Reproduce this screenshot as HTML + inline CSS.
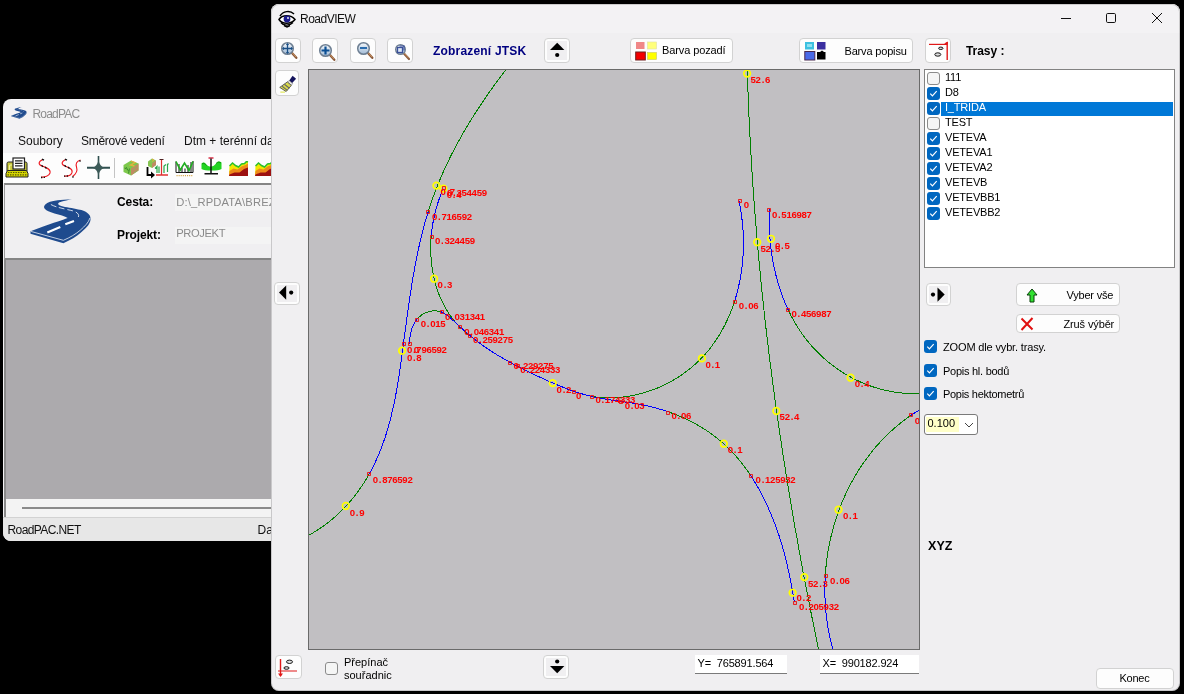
<!DOCTYPE html>
<html lang="cs"><head><meta charset="utf-8"><title>RoadVIEW</title>
<style>
html,body{margin:0;padding:0;background:#000;}
body{width:1184px;height:694px;overflow:hidden;position:relative;font-family:"Liberation Sans",sans-serif;font-size:11px;color:#000;}
.a{position:absolute;}
#pac,#rv{will-change:transform;}
.t{position:absolute;white-space:nowrap;line-height:1;}
/* RoadPAC window */
#pac{left:3px;top:99px;width:560px;height:442px;background:#f3f2f4;border-radius:8px;overflow:hidden;}
#pac .ttl{left:29.500px;top:9px;font-size:12px;color:#8c8c8c;letter-spacing:-0.800px;}
#pac .menu{top:36px;font-size:12px;color:#111;}
#pac .tb{left:0;top:54px;width:560px;height:30px;background:#fdfdfd;}
#pac .panel{left:1px;top:84px;width:560px;height:77px;background:#f0eff1;border-top:2px solid #858585;border-left:1.500px solid #9a9a9a;border-bottom:2px solid #858585;box-sizing:border-box;}
#pac .gray{left:1px;top:161px;width:560px;height:239px;background:#acaaad;border-left:2px solid #8a8a8a;box-sizing:border-box;}
#pac .sbar{left:1px;top:400px;width:560px;height:18px;background:#f3f3f3;border-left:2px solid #8a8a8a;box-sizing:border-box;}
#pac .status{left:0;top:418px;width:560px;height:24px;background:#e7e7e7;border-top:1px solid #d2d2d2;box-sizing:border-box;}
#pac .lab{font-weight:bold;font-size:12px;color:#000;letter-spacing:-0.1px;}
#pac .fld{height:17px;background:#f4f4f4;color:#8a8a8a;font-size:11.200px;}
/* RoadVIEW window */
#rv{left:271px;top:4px;width:909px;height:686.700px;background:#f0eff1;border-radius:8px;overflow:hidden;}
#rv:after{content:"";position:absolute;left:0;top:0;right:0;bottom:0;border-radius:8px;box-shadow:inset 0 0 0 1px rgba(0,0,0,0.16);pointer-events:none;}
#rv .tbar{left:0;top:0;width:909px;height:29px;background:#f3f2f4;}
.btn{position:absolute;background:#fdfdfd;border:1px solid #d2d2d2;border-radius:4px;box-sizing:border-box;}
.btn svg{position:absolute;}
.ib{position:absolute;left:2px;top:2px;right:2px;bottom:2px;background:#f0eff1;}
.cb{position:absolute;width:13px;height:13px;box-sizing:border-box;border-radius:3px;}
.cb.off{border:1px solid #8b8b8b;background:#f5f5f5;}
.cb.on{background:#0067c0;}
.cb.on svg{position:absolute;left:0;top:0;}
#canvas{left:37px;top:65px;width:612px;height:581px;background:#c1bfc2;border:1px solid #6a6a6a;box-sizing:border-box;overflow:hidden;}
#canvas svg.cv{position:absolute;left:0;top:0;}
.lb text{font-family:"Liberation Sans",sans-serif;font-weight:bold;font-size:9.6px;letter-spacing:-0.28px;fill:#ff0000;}
#list{left:653px;top:65px;width:251px;height:199px;background:#fff;border:1px solid #828282;box-sizing:border-box;}
#list .it{position:absolute;left:20px;letter-spacing:-0.200px;font-size:11px;line-height:1;white-space:nowrap;}
.inp{position:absolute;background:#fff;border-bottom:1px solid #7a7a7a;box-sizing:border-box;height:19px;}
</style></head><body>

<!-- ============ RoadPAC window (background) ============ -->
<div id="pac" class="a">
  <svg class="a" style="left:8.300px;top:7.600px" width="16" height="12" viewBox="0 0 62 46"><use href="#road"/></svg>
  <div class="t ttl">RoadPAC</div>
  <div class="t menu" style="left:15px">Soubory</div>
  <div class="t menu" style="left:78px;letter-spacing:-0.280px">Směrové vedení</div>
  <div class="t menu" style="left:181px">Dtm + terénní data</div>
  <div class="a tb">
    <!-- printer/list : page x6-28 y157-177 -->
    <svg class="a" style="left:2px;top:4px" width="24" height="21" viewBox="0 0 24 21"><path d="M2 6.500q0-1.500 1.500-1.500h17q1.500 0 1.500 1.500v8h-20z" fill="#c9c93a" stroke="#222" stroke-width="1"/><path d="M4.500 14v-5q0-1 1-1h1.500" fill="none" stroke="#f0f0a0" stroke-width="1.200"/><rect x="8" y="1" width="11.500" height="11" fill="#fff" stroke="#222" stroke-width="1.200"/><path d="M10 3.800h7.500M10 6.300h7.500M10 8.800h7.500" stroke="#222" stroke-width="1.300"/><path d="M2.500 13.500h19l1.500 3v3.500h-22v-3.500z" fill="#d6d600" stroke="#222" stroke-width="1"/><path d="M3 15.500h18M2.500 17.800h19" stroke="#55550a" stroke-width="1.200" stroke-dasharray="1.400 1.100"/></svg>
    <!-- S curve : page x38-52 y159-178 -->
    <svg class="a" style="left:34px;top:5px" width="17" height="21" viewBox="0 0 17 21"><path d="M6 1.500c-5 2-5 5-1 6.500c4 1.500 9 3 8 7c-1 3-5 4.500-9 4" fill="none" stroke="#ee1c24" stroke-width="1.100"/><path d="M5 1.200l2 1M4.500 7.200l1.500 1.500M8 9l1.500 1.500M4 19.500h1.300M6.700 19.300h1.300" stroke="#111" stroke-width="1.300"/></svg>
    <!-- SS : page x61-79 -->
    <svg class="a" style="left:57px;top:5px" width="22" height="21" viewBox="0 0 22 21"><path d="M6 1.500c-5 2-5 5-1 6.500c4 1.500 8 3 7 6.500c-1 3-4 4-8 3.500" fill="none" stroke="#ee1c24" stroke-width="1.100"/><path d="M20.500 2c-4 1-5 4-4 7c1 3 1 6-4 9.500" fill="none" stroke="#ee1c24" stroke-width="1.100"/><path d="M5 1.200l2 1M4.500 7.200l1.500 1.500M8 9l1.500 1.500M4 18.200h1.300M6.700 18h1.300M12.500 19.500l1-1M19.500 2.500l1 1" stroke="#111" stroke-width="1.300"/></svg>
    <!-- interchange : page x87-109 y156.500-179 -->
    <svg class="a" style="left:84px;top:3px" width="23" height="23" viewBox="0 0 23 23"><path d="M0 11.800h23" stroke="#2f4f4f" stroke-width="2"/><path d="M11.500 0v23" stroke="#2f4f4f" stroke-width="1.600"/><path d="M11.500 1c0 6-1.800 9.300-6 10.800c4.200 1.500 6 4.800 6 10.200c0-5.400 1.800-8.700 6-10.200c-4.200-1.500-6-4.800-6-10.800z" fill="#3c5a58"/></svg>
    <div class="a" style="left:111px;top:5px;width:1px;height:20px;background:#c4c4c4"></div>
    <!-- cube: page x123-138 y160-176 -->
    <svg class="a" style="left:120px;top:7px" width="16" height="16" viewBox="0 0 16 16"><path d="M0.500 5l7.500-4.500 7.500 3v7l-7.500 5-7.500-3.500z" fill="#7dc84c"/><path d="M8 8.500l7.500-5v7l-7.500 5z" fill="#c08a62"/><path d="M8 1l4 1.500-4.500 2.500 4 1" fill="none" stroke="#e2b040" stroke-width="1.300"/><path d="M3 7l2.500 4M6.500 8.500l-1 5M1.500 8l2 1" stroke="#3f8f2f" stroke-width="1"/><path d="M10 10l4-3M11 13l3.500-3" stroke="#86b860" stroke-width="0.900"/></svg>
    <!-- icon6: page x147-168.500 y158-178.500 -->
    <svg class="a" style="left:143px;top:5px" width="23" height="21" viewBox="0 0 23 21"><path d="M2 3.500l4-3 4 2v4.500l-4 3-4-2z" fill="#86c552"/><path d="M6 5.500l4-3v4.500l-4 3z" fill="#c08a62"/><path d="M6 1l2 1-2 1.500" fill="none" stroke="#e2b040" stroke-width="1"/><path d="M1.500 9v8h4" fill="none" stroke="#000" stroke-width="1.800"/><path d="M5 13.500l4 3.500-4 3.500z" fill="#000"/><path d="M10 17h12" stroke="#e03030" stroke-width="1.300"/><path d="M15.500 2v15" stroke="#e03030" stroke-width="1.200"/><path d="M13.500 1.500h4" stroke="#502020" stroke-width="1.200"/><path d="M9 10.500l2-2v6.500M13 15v-6.500M18 15v-7l2-1.500M21.500 14v-7.500l1-1" fill="none" stroke="#2aa84a" stroke-width="1.200"/></svg>
    <!-- icon7: page x176-193.500 y161-176.500 -->
    <svg class="a" style="left:172px;top:7px" width="19" height="18" viewBox="0 0 19 18"><path d="M1 1.500v11M4 4v8.500M7 8v4.500M10 8.500v4M13 5v7.500M16 2v10.500M18 1v11.500M1 12.500h17" fill="none" stroke="#111" stroke-width="1"/><path d="M1 1.500l4.300 8.500 4.200-7 4.500 7.500 4-9" fill="none" stroke="#1fae1f" stroke-width="1.600"/><path d="M1.500 15.700h16.500" stroke="#d8a848" stroke-width="1.200" stroke-dasharray="1.100 1"/></svg>
    <!-- icon8: page x201.500-221 y157.500-174.500 -->
    <svg class="a" style="left:198px;top:4px" width="21" height="18" viewBox="0 0 21 18"><path d="M7.500 1h5" stroke="#d83048" stroke-width="1.500"/><path d="M0.500 6.500c1.500-1.500 3-1.500 4.500 0.500s3 2.500 5 2.500s3.500-1 5.500-3.500s3.500-1.500 5-0.500v6.500c-2 1.500-5 1.500-10 1.500s-8 0-10-1.500z" fill="#22d422"/><path d="M1 7c2-1.500 3 0 4.500 1.500M15 6.500c2-2 3.500-1.500 5-0.500" fill="none" stroke="#0c8c0c" stroke-width="0.900"/><path d="M10 1.500v15.500M3.500 16.800h13.500" stroke="#111" stroke-width="1.500"/></svg>
    <!-- icon9: page x229-249 y161.500-176.500 -->
    <svg class="a" style="left:226px;top:8px" width="20" height="16" viewBox="0 0 20 16"><path d="M0.500 5l3-3 3 2.500 3 1.500 3-3 3-0.500 2-2 1.500 0.500v14h-19z" fill="#f2e800"/><path d="M0.500 10l4-2.500 4 1 4-3 4-1.500 2.500-1.500v12.500h-19z" fill="#ee8a1a"/><path d="M0.500 13.500l5-2 5 0 4.500-3.500 4-1.500v8.500h-19z" fill="#9c1010"/><path d="M0.500 5l3-3 3 2.500 3 1.500 3-3 3-0.500 2-2 1.500 0.500" fill="none" stroke="#2cc02c" stroke-width="1.500"/></svg>
    <svg class="a" style="left:252px;top:8px" width="20" height="16" viewBox="0 0 20 16"><path d="M0.500 5l3-3 3 2.500 3 1.500 3-3 3-0.500 2-2 1.500 0.500v14h-19z" fill="#f2e800"/><path d="M0.500 10l4-2.500 4 1 4-3 4-1.500 2.500-1.500v12.500h-19z" fill="#ee8a1a"/><path d="M0.500 13.500l5-2 5 0 4.500-3.500 4-1.500v8.500h-19z" fill="#9c1010"/><path d="M0.500 5l3-3 3 2.500 3 1.500 3-3 3-0.500 2-2 1.500 0.500" fill="none" stroke="#2cc02c" stroke-width="1.500"/></svg>
  </div>
  <div class="a panel"></div>
  <!-- road logo: page x30-91 y198-243 -->
  <svg class="a" style="left:27px;top:99px" width="62" height="46" viewBox="0 0 62 46"><use href="#road"/></svg>
  <div class="t lab" style="left:114px;top:97.400px">Cesta:</div>
  <div class="t lab" style="left:114px;top:130.400px">Projekt:</div>
  <div class="a fld" style="left:172px;top:95px;width:400px"><div class="t" style="left:1.300px;top:2.500px;letter-spacing:0.150px">D:\_RPDATA\BREZNO</div></div>
  <div class="a fld" style="left:172px;top:128px;width:400px"><div class="t" style="left:1.300px;top:1.300px;letter-spacing:-0.400px">PROJEKT</div></div>
  <div class="a gray"></div>
  <div class="a sbar"><div class="a" style="left:16px;top:8px;width:560px;height:2px;background:#8a8a8a"></div></div>
  <div class="a status">
    <div class="t" style="left:4.500px;top:5.500px;font-size:12px;color:#111;letter-spacing:-0.600px">RoadPAC.NET</div>
    <div class="t" style="left:254.500px;top:5.500px;font-size:12px;color:#111">Data</div>
  </div>
</div>

<!-- ============ RoadVIEW window ============ -->
<div id="rv" class="a">
  <div class="a tbar"></div>
  <!-- eye icon -->
  <svg class="a" style="left:7px;top:5px" width="18" height="19" viewBox="0 0 18 19"><path d="M2 7c3-5 10-6 14-2" fill="none" stroke="#000" stroke-width="1.500"/><path d="M1 10.500c3-5 12-5 16 0c-4 5-13 5-16 0z" fill="#fff" stroke="#000" stroke-width="1.500"/><circle cx="9" cy="10" r="3.400" fill="#1a1a8c"/><circle cx="10" cy="9" r="0.900" fill="#fff"/><path d="M3 13.500c2 3 8 4 12 0" fill="none" stroke="#000" stroke-width="1.400"/><path d="M6 16.500l3 1.500 3-1.500" fill="none" stroke="#000" stroke-width="1.400"/></svg>
  <div class="t" style="left:29px;top:9px;font-size:12px;color:#111;letter-spacing:-0.500px">RoadVIEW</div>
  <!-- caption buttons -->
  <svg class="a" style="left:785px;top:6px" width="112" height="18" viewBox="0 0 112 18"><path d="M5 8.500h10" stroke="#111" stroke-width="1"/><rect x="50.500" y="3.500" width="9" height="9" rx="1.200" fill="none" stroke="#111" stroke-width="1"/><path d="M96 3l10 10M106 3l-10 10" stroke="#111" stroke-width="1"/></svg>

  <!-- toolbar buttons -->
  <div class="btn" style="left:4px;top:34px;width:26px;height:25px"><svg style="left:4px;top:2px" width="18" height="19" viewBox="0 0 18 19"><use href="#mag"/><path d="M7.500 3.500v8M3.500 7.500h8" stroke="#1a4f86" stroke-width="1.300"/><path d="M7.500 2l-1.700 2h3.400zM7.500 13l-1.700-2h3.400zM2 7.500l2-1.700v3.400zM13 7.500l-2-1.700v3.400z" fill="#1a4f86"/></svg></div>
  <div class="btn" style="left:41px;top:34px;width:26px;height:25px"><svg style="left:5px;top:4px" width="18" height="19" viewBox="0 0 18 19"><use href="#mag"/><path d="M7.500 3.500v8M3.500 7.500h8" stroke="#0b4f94" stroke-width="2.200"/></svg></div>
  <div class="btn" style="left:79px;top:34px;width:26px;height:25px"><svg style="left:5px;top:2px" width="18" height="19" viewBox="0 0 18 19"><use href="#mag"/><path d="M4 7h7" stroke="#2a6cae" stroke-width="2"/></svg></div>
  <div class="btn" style="left:116px;top:34px;width:26px;height:25px"><svg style="left:6px;top:4px" width="18" height="19" viewBox="0 0 18 19"><use href="#mag2"/><rect x="3.500" y="4.500" width="5" height="5" fill="#dfe9f5" stroke="#3a4f9a" stroke-width="1.300"/><path d="M5.500 3h4.500v4.500" fill="none" stroke="#3a4f9a" stroke-width="1.200"/></svg></div>
  <div class="btn" style="left:4px;top:66px;width:24px;height:26px"><svg style="left:1.500px;top:3px" width="21" height="21" viewBox="0 0 18 18"><path d="M12.500 1.500l3 2.500-3.500 4-2.500-2.200z" fill="#14145c"/><path d="M9.500 5.500l3 2.700-1.200 1.500-3.200-2.800z" fill="#e6e6e6" stroke="#777" stroke-width="0.600"/><path d="M8 6.800l3.400 3-4.400 5.200-5.500-3.500z" fill="#d8d84a" stroke="#555" stroke-width="0.800"/><path d="M3.500 10.500l4.500 3.500M5.500 8.800l4.300 3.400" stroke="#666" stroke-width="0.900"/><path d="M2 15.500h4" stroke="#e2e860" stroke-width="1"/></svg></div>
  <div class="t" style="left:162px;top:41px;font-size:12px;font-weight:bold;color:#000080;letter-spacing:0.190px">Zobrazení JTSK</div>
  <div class="btn" style="left:273px;top:34px;width:26px;height:25px"><div class="ib"></div><svg style="left:0;top:-0.900px" width="24" height="23" viewBox="0 0 24 23"><path d="M12.200 4.800l7.200 7.200h-14.400z" fill="#000"/><circle cx="12.200" cy="17" r="2.100" fill="#000"/></svg></div>
  <div class="btn" style="left:359px;top:34px;width:103px;height:25px"><svg style="left:4px;top:2px" width="23" height="20" viewBox="0 0 23 20"><rect x="1" y="1" width="8.500" height="7" fill="#f08888"/><rect x="12.500" y="1" width="9" height="7" fill="#ffff7a" stroke="#e0e0a0" stroke-width="0.600"/><rect x="0.700" y="11" width="9.600" height="8" fill="#f40000" stroke="#702020" stroke-width="1"/><rect x="12.500" y="11.500" width="9" height="7" fill="#ffff00" stroke="#c8c860" stroke-width="0.600"/></svg><div class="t" style="left:31px;top:6.300px;letter-spacing:-0.110px">Barva pozadí</div></div>
  <div class="btn" style="left:528px;top:34px;width:114px;height:25px"><svg style="left:4px;top:2px" width="23" height="20" viewBox="0 0 23 20"><rect x="1" y="1" width="9" height="7.500" fill="#3cc0e0"/><path d="M3 3h5v3h-5z" fill="#8fe0f0"/><rect x="13" y="1" width="8.500" height="7.500" fill="#3a2fa0"/><rect x="0.800" y="10.500" width="10" height="8.500" fill="#4a6ae8" stroke="#4a2a50" stroke-width="1"/><rect x="13" y="11" width="8.500" height="7.500" fill="#000"/><path d="M18 9.500l2 1.500h-4z" fill="#000"/></svg><div class="t" style="left:44.500px;top:6.700px;letter-spacing:-0.170px">Barva popisu</div></div>
  <div class="btn" style="left:654px;top:34px;width:26px;height:25px"><svg style="left:2px;top:2px" width="22" height="21" viewBox="0 0 22 21"><path d="M1 3.400h18" stroke="#e01818" stroke-width="1.200"/><path d="M19.200 1v18" stroke="#e01818" stroke-width="1.400"/><path d="M16.200 2.600l3.500-2.100v3.200z" fill="#e01818"/><ellipse cx="12.800" cy="7.300" rx="2.200" ry="1.200" fill="#ddd" stroke="#000" stroke-width="0.900"/><ellipse cx="9.800" cy="13.500" rx="3" ry="1.700" fill="#ddd" stroke="#000" stroke-width="0.900"/></svg></div>
  <div class="t" style="left:695px;top:41px;font-size:12px;font-weight:bold;color:#000;letter-spacing:-0.050px">Trasy :</div>

  <!-- left arrow button -->
  <div class="btn" style="left:3px;top:278px;width:25.500px;height:22.700px"><div class="ib"></div><svg style="left:-0.600px;top:-0.600px" width="23" height="21" viewBox="0 0 23 21"><path d="M12.200 3.500v14.200l-7.200-7.100z" fill="#000"/><circle cx="17.200" cy="10.600" r="2.100" fill="#000"/></svg></div>

  <!-- canvas -->
  <div id="canvas" class="a">
<svg class="cv" viewBox="309 70 610 579" width="610" height="579">
<g fill="none" stroke-width="1" shape-rendering="crispEdges">
<path stroke="#008000" d="M508.7 66.1C507.3 67.9 505.9 69.8 504.5 71.6C503.0 73.4 501.6 75.3 500.3 77.1C498.9 79.0 497.5 80.9 496.1 82.8C494.7 84.6 493.4 86.5 492.0 88.4C490.6 90.3 489.3 92.2 488.0 94.1C486.6 96.1 485.3 98.0 484.0 99.9C482.7 101.9 481.4 103.8 480.1 105.8C478.8 107.7 477.5 109.7 476.2 111.6C475.0 113.6 473.7 115.6 472.5 117.6C471.2 119.6 470.0 121.6 468.8 123.6C467.6 125.6 466.4 127.6 465.2 129.6C464.0 131.6 462.8 133.7 461.7 135.7C460.5 137.7 459.4 139.8 458.3 141.8C457.1 143.9 456.0 145.9 454.9 148.0C453.8 150.1 452.8 152.2 451.7 154.2C450.7 156.3 449.6 158.4 448.6 160.5C447.6 162.6 446.6 164.7 445.6 166.8C444.6 168.9 443.7 171.1 442.7 173.2C441.8 175.3 440.9 177.5 440.0 179.6C439.1 181.7 438.2 183.9 437.3 186.0C436.5 188.2 435.6 190.3 434.8 192.5C434.0 194.7 433.2 196.9 432.4 199.0C431.6 201.2 430.9 203.4 430.2 205.6C429.4 207.8 428.7 210.0 428.1 212.2"/>
<path stroke="#008000" d="M369.2 474.0C368.1 476.0 366.9 477.9 365.8 479.9C364.6 481.8 363.4 483.7 362.1 485.6C360.8 487.5 359.6 489.4 358.2 491.2C356.9 493.0 355.5 494.8 354.1 496.6C352.7 498.4 351.3 500.2 349.8 501.9C348.3 503.6 346.7 505.3 345.2 507.0C343.6 508.7 342.0 510.3 340.3 511.9C338.7 513.5 337.0 515.1 335.2 516.6C333.5 518.2 331.7 519.7 329.9 521.1C328.1 522.6 326.2 524.0 324.3 525.4C322.4 526.8 320.4 528.2 318.4 529.5C316.4 530.8 314.3 532.1 312.2 533.3C310.1 534.5 308.0 535.7 305.8 536.9C303.6 538.0 301.4 539.1 299.1 540.2"/>
<path stroke="#008000" d="M431.2 236.3C431.0 238.6 430.9 240.9 430.8 243.3C430.7 245.6 430.7 248.0 430.7 250.3C430.8 252.7 430.9 255.0 431.0 257.3C431.2 259.7 431.4 262.0 431.6 264.3C431.9 266.6 432.2 268.9 432.6 271.2C433.0 273.5 433.5 275.8 434.0 278.1C434.5 280.3 435.1 282.6 435.7 284.8C436.4 287.0 437.1 289.2 437.9 291.4C438.6 293.5 439.5 295.7 440.4 297.8C441.3 299.9 442.3 301.9 443.3 304.0C444.4 306.0 445.5 308.0 446.6 310.0C447.8 312.0 449.1 313.9 450.4 315.8C451.7 317.7 453.1 319.5 454.6 321.3C456.1 323.1 457.6 324.8 459.2 326.5C460.8 328.2 462.5 329.8 464.3 331.4C466.0 333.0 467.9 334.5 469.8 336.0"/>
<path stroke="#008000" d="M734.5 301.3C733.8 303.5 733.1 305.7 732.3 307.9C731.5 310.1 730.6 312.2 729.8 314.3C728.9 316.5 727.9 318.6 727.0 320.6C726.0 322.7 725.0 324.8 723.9 326.8C722.9 328.8 721.7 330.8 720.6 332.8C719.4 334.8 718.2 336.7 717.0 338.6C715.7 340.5 714.5 342.4 713.1 344.2C711.8 346.1 710.4 347.9 709.0 349.7C707.5 351.4 706.1 353.2 704.5 354.9C703.0 356.5 701.5 358.2 699.8 359.8C698.2 361.4 696.6 363.0 694.9 364.5C693.2 366.0 691.4 367.5 689.6 369.0C687.8 370.4 686.0 371.8 684.1 373.1C682.3 374.5 680.4 375.8 678.4 377.0C676.5 378.3 674.5 379.5 672.5 380.6C670.5 381.8 668.5 382.9 666.4 383.9C664.4 384.9 662.3 385.9 660.1 386.9C658.0 387.8 655.9 388.7 653.7 389.5C651.5 390.3 649.3 391.1 647.1 391.8C644.9 392.5 642.7 393.1 640.4 393.7C638.2 394.3 635.9 394.8 633.6 395.3C631.4 395.8 629.1 396.2 626.8 396.5C624.4 396.8 622.1 397.1 619.8 397.3C617.5 397.5 615.1 397.7 612.8 397.7C610.4 397.8 608.1 397.8 605.7 397.7C603.4 397.7 601.0 397.5 598.7 397.3C596.3 397.1 594.0 396.8 591.6 396.4"/>
<path stroke="#008000" d="M416.7 319.6C418.2 317.8 419.9 316.2 421.8 314.9C423.8 313.6 425.8 312.6 428.0 311.9C430.2 311.1 432.4 310.8 434.6 310.8C436.8 310.8 439.0 311.1 441.1 311.8"/>
<path stroke="#008000" d="M667.9 411.7C670.0 412.4 672.1 413.2 674.1 414.0C676.2 414.8 678.3 415.6 680.3 416.5C682.4 417.4 684.4 418.3 686.4 419.3C688.4 420.2 690.4 421.2 692.4 422.2C694.3 423.3 696.3 424.3 698.2 425.4C700.1 426.5 702.0 427.7 703.9 428.9C705.8 430.0 707.6 431.3 709.4 432.5C711.2 433.8 713.0 435.1 714.8 436.4C716.5 437.7 718.2 439.1 719.9 440.5C721.6 441.9 723.3 443.4 724.9 444.9C726.5 446.4 728.1 447.9 729.7 449.5C731.2 451.0 732.7 452.6 734.2 454.3C735.7 455.9 737.2 457.6 738.6 459.3C740.0 461.0 741.4 462.7 742.7 464.4C744.1 466.2 745.4 468.0 746.7 469.8C748.0 471.6 749.3 473.4 750.5 475.3"/>
<path stroke="#008000" d="M747.2 66.0C747.3 68.3 747.3 70.6 747.4 73.0C747.5 75.3 747.5 77.6 747.6 79.9C747.7 82.2 747.8 84.6 747.8 86.9C747.9 89.2 748.0 91.5 748.1 93.9C748.2 96.2 748.3 98.5 748.4 100.8C748.5 103.1 748.5 105.5 748.6 107.8C748.7 110.1 748.8 112.4 748.9 114.7C749.0 117.1 749.2 119.4 749.3 121.7C749.4 124.0 749.5 126.3 749.6 128.7C749.7 131.0 749.8 133.3 749.9 135.6C750.1 137.9 750.2 140.3 750.3 142.6C750.4 144.9 750.6 147.2 750.7 149.5C750.8 151.9 751.0 154.2 751.1 156.5C751.2 158.8 751.4 161.1 751.5 163.4C751.6 165.8 751.8 168.1 751.9 170.4C752.1 172.7 752.2 175.0 752.4 177.4C752.5 179.7 752.7 182.0 752.8 184.3C753.0 186.6 753.2 188.9 753.3 191.3C753.5 193.6 753.7 195.9 753.8 198.2C754.0 200.5 754.2 202.8 754.3 205.2C754.5 207.5 754.7 209.8 754.9 212.1C755.0 214.4 755.2 216.7 755.4 219.0C755.6 221.4 755.8 223.7 756.0 226.0C756.1 228.3 756.3 230.6 756.5 232.9C756.7 235.2 756.9 237.6 757.1 239.9C757.3 242.2 757.5 244.5 757.7 246.8C757.9 249.1 758.1 251.4 758.4 253.8C758.6 256.1 758.8 258.4 759.0 260.7C759.2 263.0 759.4 265.3 759.6 267.6C759.9 269.9 760.1 272.3 760.3 274.6C760.5 276.9 760.8 279.2 761.0 281.5C761.2 283.8 761.5 286.1 761.7 288.4C761.9 290.7 762.2 293.0 762.4 295.4C762.6 297.7 762.9 300.0 763.1 302.3C763.4 304.6 763.6 306.9 763.9 309.2C764.1 311.5 764.4 313.8 764.6 316.1C764.9 318.4 765.2 320.8 765.4 323.1C765.7 325.4 765.9 327.7 766.2 330.0C766.5 332.3 766.7 334.6 767.0 336.9C767.3 339.2 767.6 341.5 767.8 343.8C768.1 346.1 768.4 348.4 768.7 350.7C768.9 353.0 769.2 355.3 769.5 357.7C769.8 360.0 770.1 362.3 770.4 364.6C770.7 366.9 771.0 369.2 771.3 371.5C771.6 373.8 771.9 376.1 772.2 378.4C772.5 380.7 772.8 383.0 773.1 385.3C773.4 387.6 773.7 389.9 774.0 392.2C774.3 394.5 774.6 396.8 774.9 399.1C775.2 401.4 775.6 403.7 775.9 406.0C776.2 408.3 776.5 410.6 776.8 412.9C777.2 415.2 777.5 417.5 777.8 419.8C778.2 422.1 778.5 424.4 778.8 426.7C779.2 429.0 779.5 431.3 779.8 433.6C780.2 435.9 780.5 438.2 780.9 440.5C781.2 442.8 781.5 445.1 781.9 447.4C782.2 449.7 782.6 452.0 782.9 454.3C783.3 456.6 783.7 458.9 784.0 461.1C784.4 463.4 784.7 465.7 785.1 468.0C785.5 470.3 785.8 472.6 786.2 474.9C786.6 477.2 786.9 479.5 787.3 481.8C787.7 484.1 788.0 486.4 788.4 488.7C788.8 491.0 789.2 493.3 789.6 495.5C789.9 497.8 790.3 500.1 790.7 502.4C791.1 504.7 791.5 507.0 791.9 509.3C792.3 511.6 792.7 513.9 793.0 516.2C793.4 518.4 793.8 520.7 794.2 523.0C794.6 525.3 795.0 527.6 795.4 529.9C795.8 532.2 796.3 534.5 796.7 536.7C797.1 539.0 797.5 541.3 797.9 543.6C798.3 545.9 798.7 548.2 799.1 550.5C799.6 552.7 800.0 555.0 800.4 557.3C800.8 559.6 801.2 561.9 801.7 564.2C802.1 566.4 802.5 568.7 802.9 571.0C803.4 573.3 803.8 575.6 804.2 577.9C804.7 580.1 805.1 582.4 805.6 584.7C806.0 587.0 806.4 589.3 806.9 591.5C807.3 593.8 807.8 596.1 808.2 598.4C808.7 600.7 809.1 602.9 809.6 605.2C810.0 607.5 810.5 609.8 810.9 612.0C811.4 614.3 811.8 616.6 812.3 618.9C812.8 621.2 813.2 623.4 813.7 625.7C814.2 628.0 814.6 630.3 815.1 632.5C815.6 634.8 816.0 637.1 816.5 639.4C817.0 641.6 817.5 643.9 817.9 646.2C818.4 648.4 818.9 650.7 819.4 653.0"/>
<path stroke="#008000" d="M788.2 309.8C789.2 311.9 790.2 313.9 791.2 316.0C792.3 318.0 793.4 320.0 794.5 322.0C795.6 323.9 796.8 325.9 798.0 327.8C799.3 329.7 800.5 331.6 801.8 333.5C803.1 335.3 804.5 337.1 805.9 338.9C807.2 340.7 808.7 342.5 810.1 344.2C811.6 345.9 813.1 347.6 814.7 349.3C816.2 350.9 817.8 352.6 819.5 354.1C821.1 355.7 822.8 357.3 824.5 358.8C826.2 360.3 827.9 361.7 829.7 363.1C831.5 364.6 833.3 366.0 835.1 367.3C836.9 368.6 838.8 369.9 840.7 371.2C842.6 372.4 844.6 373.6 846.5 374.8C848.5 375.9 850.5 377.0 852.5 378.1C854.5 379.2 856.5 380.2 858.6 381.1C860.7 382.1 862.8 383.0 864.9 383.9C867.0 384.7 869.2 385.5 871.3 386.3C873.5 387.0 875.7 387.7 877.9 388.4C880.1 389.0 882.3 389.6 884.5 390.1C886.8 390.7 889.0 391.1 891.3 391.5C893.6 392.0 895.9 392.3 898.2 392.6C900.5 392.9 902.8 393.1 905.1 393.3C907.5 393.5 909.8 393.6 912.2 393.6C914.5 393.7 916.9 393.6 919.2 393.6C921.6 393.5 924.0 393.3 926.4 393.1"/>
<path stroke="#008000" d="M910.8 415.4C908.9 416.8 907.0 418.1 905.1 419.5C903.3 420.9 901.4 422.4 899.6 423.8C897.8 425.3 896.0 426.8 894.3 428.3C892.5 429.9 890.8 431.4 889.1 433.0C887.4 434.6 885.8 436.2 884.2 437.9C882.6 439.5 881.0 441.2 879.4 442.9C877.9 444.6 876.3 446.3 874.8 448.1C873.4 449.9 871.9 451.6 870.5 453.5C869.0 455.3 867.7 457.1 866.3 459.0C864.9 460.8 863.6 462.7 862.3 464.6C861.0 466.5 859.7 468.5 858.5 470.4C857.3 472.4 856.1 474.3 854.9 476.3C853.8 478.3 852.6 480.3 851.5 482.4C850.4 484.4 849.4 486.4 848.3 488.5C847.3 490.6 846.3 492.7 845.3 494.8C844.4 496.9 843.4 499.0 842.5 501.1C841.6 503.3 840.8 505.4 839.9 507.6C839.1 509.8 838.3 511.9 837.6 514.1C836.8 516.3 836.1 518.5 835.4 520.7C834.7 523.0 834.0 525.2 833.4 527.4C832.7 529.7 832.2 531.9 831.6 534.2C831.0 536.4 830.5 538.7 830.0 541.0C829.5 543.2 829.1 545.5 828.7 547.8C828.2 550.1 827.8 552.4 827.5 554.7C827.1 557.0 826.8 559.3 826.5 561.6C826.3 564.0 826.0 566.3 825.8 568.6C825.6 570.9 825.4 573.2 825.3 575.6"/>
<path stroke="#0000ff" d="M428.1 212.2C427.4 214.4 426.7 216.6 426.1 218.7C425.4 220.9 424.8 223.1 424.2 225.3C423.6 227.5 423.0 229.8 422.5 232.0C421.9 234.2 421.4 236.4 420.8 238.6C420.3 240.8 419.8 243.1 419.3 245.3C418.8 247.5 418.3 249.8 417.8 252.0C417.3 254.3 416.9 256.5 416.4 258.8C416.0 261.0 415.5 263.3 415.1 265.5C414.7 267.8 414.3 270.0 413.9 272.3C413.5 274.6 413.1 276.8 412.7 279.1C412.3 281.4 411.9 283.6 411.6 285.9C411.2 288.2 410.9 290.5 410.5 292.8C410.2 295.1 409.8 297.3 409.5 299.6C409.1 301.9 408.8 304.2 408.5 306.5C408.2 308.8 407.8 311.1 407.5 313.4C407.2 315.7 406.9 318.0 406.6 320.3C406.3 322.6 406.0 324.9 405.7 327.2C405.4 329.5 405.1 331.8 404.8 334.1C404.4 336.4 404.1 338.8 403.8 341.1C403.5 343.4 403.2 345.7 402.9 348.0C402.6 350.3 402.3 352.6 402.0 355.0C401.7 357.3 401.4 359.6 401.0 361.9C400.7 364.2 400.4 366.5 400.1 368.8C399.7 371.1 399.4 373.4 399.0 375.8C398.7 378.1 398.3 380.4 397.9 382.7C397.5 384.9 397.1 387.2 396.7 389.5C396.3 391.8 395.9 394.1 395.5 396.4C395.0 398.6 394.6 400.9 394.1 403.2C393.6 405.4 393.1 407.7 392.6 409.9C392.1 412.2 391.6 414.4 391.0 416.7C390.5 418.9 389.9 421.1 389.3 423.3C388.7 425.5 388.1 427.7 387.4 429.9C386.8 432.1 386.1 434.3 385.4 436.5C384.7 438.6 383.9 440.8 383.2 442.9C382.4 445.1 381.6 447.2 380.8 449.3C380.0 451.4 379.1 453.6 378.2 455.6C377.3 457.7 376.4 459.8 375.4 461.9C374.4 463.9 373.4 466.0 372.4 468.0C371.4 470.0 370.3 472.0 369.2 474.0"/>
<path stroke="#0000ff" d="M442.7 190.3C441.8 192.3 441.0 194.4 440.2 196.4C439.4 198.5 438.6 200.6 437.9 202.8C437.2 204.9 436.6 207.1 436.0 209.3C435.4 211.4 434.9 213.6 434.4 215.9C433.9 218.1 433.4 220.3 433.0 222.6C432.6 224.8 432.3 227.1 432.0 229.4C431.7 231.7 431.4 234.0 431.2 236.3"/>
<path stroke="#0000ff" d="M738.9 200.5C739.3 202.6 739.8 204.8 740.2 207.0C740.6 209.2 740.9 211.4 741.3 213.6C741.6 215.8 741.9 218.0 742.1 220.3C742.4 222.5 742.6 224.8 742.8 227.0C743.0 229.3 743.1 231.5 743.2 233.8C743.3 236.1 743.4 238.4 743.4 240.6C743.4 242.9 743.4 245.2 743.4 247.5C743.3 249.8 743.2 252.0 743.1 254.3C743.0 256.6 742.8 258.9 742.6 261.2C742.4 263.4 742.2 265.7 741.9 268.0C741.6 270.3 741.3 272.5 740.9 274.8C740.5 277.0 740.1 279.3 739.7 281.5C739.2 283.8 738.7 286.0 738.2 288.2C737.7 290.4 737.1 292.6 736.5 294.8C735.9 297.0 735.2 299.2 734.5 301.3"/>
<path stroke="#0000ff" d="M409.8 344.0C409.7 341.9 409.8 339.8 410.0 337.6C410.2 335.4 410.6 333.3 411.1 331.2C411.6 329.0 412.3 327.0 413.3 325.0C414.2 323.1 415.3 321.2 416.7 319.6"/>
<path stroke="#0000ff" d="M441.1 311.8C443.1 312.6 445.0 313.7 446.8 315.0C448.6 316.3 450.3 317.9 452.0 319.4C453.7 321.0 455.4 322.6 457.1 324.1C458.8 325.7 460.5 327.2 462.2 328.7C463.9 330.3 465.6 331.8 467.3 333.3C469.1 334.7 470.8 336.2 472.6 337.6C474.3 339.1 476.1 340.5 477.9 341.8C479.7 343.2 481.5 344.5 483.4 345.9C485.2 347.2 487.1 348.4 489.0 349.7C490.8 350.9 492.7 352.2 494.7 353.4C496.6 354.6 498.5 355.7 500.5 356.9C502.4 358.0 504.4 359.2 506.4 360.3C508.4 361.4 510.4 362.5 512.4 363.5C514.4 364.6 516.4 365.7 518.4 366.7C520.5 367.7 522.5 368.8 524.5 369.8C526.6 370.8 528.6 371.8 530.7 372.8C532.7 373.8 534.8 374.8 536.9 375.8C538.9 376.7 541.0 377.7 543.1 378.7C545.2 379.6 547.2 380.6 549.3 381.5C551.4 382.4 553.5 383.4 555.6 384.2C557.7 385.1 559.8 386.0 561.9 386.8C564.0 387.7 566.2 388.5 568.3 389.3C570.4 390.1 572.5 390.8 574.7 391.6C576.8 392.3 579.0 393.0 581.2 393.6C583.3 394.3 585.5 394.9 587.7 395.4C589.9 396.0 592.1 396.5 594.3 397.0C596.5 397.5 598.7 397.9 600.9 398.3C603.1 398.7 605.4 399.1 607.6 399.5C609.8 399.8 612.1 400.1 614.3 400.5C616.6 400.8 618.8 401.1 621.1 401.4C623.3 401.7 625.6 402.1 627.8 402.4C630.1 402.7 632.3 403.1 634.6 403.5C636.8 403.8 639.1 404.2 641.3 404.7C643.6 405.1 645.8 405.6 648.0 406.1C650.3 406.6 652.5 407.1 654.7 407.7C656.9 408.3 659.1 408.9 661.3 409.6C663.5 410.3 665.7 411.0 667.9 411.7"/>
<path stroke="#0000ff" d="M750.5 475.3C751.8 477.2 753.0 479.1 754.2 481.0C755.3 482.9 756.5 484.9 757.6 486.9C758.8 488.8 759.9 490.8 760.9 492.8C762.0 494.8 763.0 496.8 764.0 498.9C765.0 500.9 766.0 502.9 767.0 505.0C767.9 507.0 768.8 509.1 769.7 511.2C770.6 513.2 771.5 515.3 772.3 517.4C773.2 519.5 774.0 521.6 774.8 523.7C775.6 525.8 776.4 527.9 777.1 530.0C777.8 532.2 778.6 534.3 779.3 536.4C779.9 538.6 780.6 540.7 781.3 542.9C781.9 545.0 782.6 547.2 783.2 549.4C783.8 551.5 784.4 553.7 784.9 555.9C785.5 558.1 786.0 560.3 786.6 562.5C787.1 564.6 787.6 566.8 788.1 569.0C788.6 571.2 789.1 573.4 789.5 575.7C790.0 577.9 790.5 580.1 790.9 582.3C791.3 584.5 791.7 586.7 792.1 589.0C792.5 591.2 792.9 593.4 793.3 595.6C793.7 597.9 794.0 600.1 794.4 602.3"/>
<path stroke="#0000ff" d="M769.5 209.5C769.4 211.8 769.3 214.0 769.3 216.3C769.2 218.5 769.2 220.8 769.3 223.1C769.3 225.3 769.4 227.6 769.5 229.9C769.6 232.1 769.7 234.4 769.9 236.7C770.0 239.0 770.2 241.3 770.4 243.6C770.7 245.8 770.9 248.1 771.2 250.4C771.5 252.7 771.9 255.0 772.2 257.2C772.6 259.5 773.0 261.8 773.5 264.1C773.9 266.3 774.4 268.6 774.9 270.8C775.4 273.1 776.0 275.3 776.5 277.5C777.1 279.8 777.8 282.0 778.4 284.2C779.1 286.4 779.8 288.6 780.5 290.7C781.2 292.9 782.0 295.1 782.8 297.2C783.6 299.4 784.5 301.5 785.4 303.6C786.3 305.7 787.2 307.8 788.2 309.8"/>
<path stroke="#0000ff" d="M926.1 406.1C924.3 407.0 922.6 408.0 920.9 409.0C919.2 410.1 917.5 411.1 915.8 412.2C914.1 413.2 912.5 414.3 910.8 415.4"/>
<path stroke="#0000ff" d="M825.3 575.6C825.1 577.7 825.0 579.9 825.0 582.1C824.9 584.3 824.8 586.5 824.8 588.6C824.8 590.8 824.8 593.0 824.9 595.2C825.0 597.3 825.0 599.5 825.2 601.7C825.3 603.9 825.4 606.0 825.6 608.2C825.8 610.4 826.0 612.5 826.2 614.7C826.5 616.9 826.7 619.0 827.0 621.2C827.3 623.3 827.7 625.4 828.0 627.6C828.4 629.7 828.8 631.9 829.2 634.0C829.7 636.1 830.1 638.2 830.6 640.3C831.1 642.4 831.7 644.5 832.2 646.6C832.8 648.7 833.4 650.8 834.0 652.9"/>
</g>
<g fill="none" stroke="#ffff00" stroke-width="1.7">
<circle cx="436.4" cy="185.6" r="3.3"/>
<circle cx="443.4" cy="188.6" r="3.3"/>
<circle cx="434.1" cy="278.7" r="3.3"/>
<circle cx="402.1" cy="350.7" r="3.3"/>
<circle cx="345.8" cy="506.0" r="3.3"/>
<circle cx="552.7" cy="383.1" r="3.3"/>
<circle cx="701.9" cy="358.4" r="3.3"/>
<circle cx="723.8" cy="443.7" r="3.3"/>
<circle cx="747.1" cy="73.5" r="3.3"/>
<circle cx="757.2" cy="242.2" r="3.3"/>
<circle cx="771.0" cy="238.8" r="3.3"/>
<circle cx="776.3" cy="411.0" r="3.3"/>
<circle cx="850.6" cy="377.7" r="3.3"/>
<circle cx="838.5" cy="509.7" r="3.3"/>
<circle cx="804.3" cy="577.1" r="3.3"/>
<circle cx="792.6" cy="592.7" r="3.3"/>
</g>
<g fill="none" stroke="#f00808" stroke-width="0.9">
<rect x="442.60" y="186.60" width="2.8" height="2.8"/>
<rect x="426.60" y="210.60" width="2.8" height="2.8"/>
<rect x="430.60" y="235.60" width="2.8" height="2.8"/>
<rect x="402.60" y="342.60" width="2.8" height="2.8"/>
<rect x="408.60" y="342.60" width="2.8" height="2.8"/>
<rect x="415.60" y="318.60" width="2.8" height="2.8"/>
<rect x="440.60" y="310.60" width="2.8" height="2.8"/>
<rect x="458.60" y="325.60" width="2.8" height="2.8"/>
<rect x="468.60" y="334.60" width="2.8" height="2.8"/>
<rect x="508.60" y="361.60" width="2.8" height="2.8"/>
<rect x="516.60" y="364.60" width="2.8" height="2.8"/>
<rect x="572.60" y="390.60" width="2.8" height="2.8"/>
<rect x="590.60" y="395.60" width="2.8" height="2.8"/>
<rect x="619.60" y="400.60" width="2.8" height="2.8"/>
<rect x="666.60" y="411.60" width="2.8" height="2.8"/>
<rect x="749.60" y="474.60" width="2.8" height="2.8"/>
<rect x="793.60" y="601.60" width="2.8" height="2.8"/>
<rect x="738.60" y="199.60" width="2.8" height="2.8"/>
<rect x="733.60" y="300.60" width="2.8" height="2.8"/>
<rect x="767.60" y="208.60" width="2.8" height="2.8"/>
<rect x="786.60" y="308.60" width="2.8" height="2.8"/>
<rect x="909.60" y="413.60" width="2.8" height="2.8"/>
<rect x="824.60" y="574.60" width="2.8" height="2.8"/>
<rect x="367.60" y="472.60" width="2.8" height="2.8"/>
</g>
<g class="lb">
<text x="750.5" y="83.0" fill="#d4102c">52<tspan dx="1.0">.</tspan><tspan dx="1.0">6</tspan></text>
<text x="440.4" y="195.1">0<tspan dx="1.0">.</tspan><tspan dx="1.0">7</tspan></text>
<text x="447.0" y="195.8">0<tspan dx="1.0">.</tspan><tspan dx="1.0">354459</tspan></text>
<text x="446.8" y="197.5">0<tspan dx="1.0">.</tspan><tspan dx="1.0">4</tspan></text>
<text x="432.0" y="219.6">0<tspan dx="1.0">.</tspan><tspan dx="1.0">716592</tspan></text>
<text x="435.0" y="244.4">0<tspan dx="1.0">.</tspan><tspan dx="1.0">324459</tspan></text>
<text x="437.6" y="287.6">0<tspan dx="1.0">.</tspan><tspan dx="1.0">3</tspan></text>
<text x="445.1" y="319.9">0<tspan dx="1.0">.</tspan><tspan dx="1.0">031341</tspan></text>
<text x="420.7" y="327.4">0<tspan dx="1.0">.</tspan><tspan dx="1.0">015</tspan></text>
<text x="464.2" y="334.8">0<tspan dx="1.0">.</tspan><tspan dx="1.0">046341</tspan></text>
<text x="473.0" y="343.0">0<tspan dx="1.0">.</tspan><tspan dx="1.0">259275</tspan></text>
<text x="406.9" y="352.6">0<tspan dx="1.0">.</tspan><tspan dx="1.0">796592</tspan></text>
<text x="413.7" y="352.6">0</text>
<text x="406.9" y="360.8">0<tspan dx="1.0">.</tspan><tspan dx="1.0">8</tspan></text>
<text x="513.5" y="369.3">0<tspan dx="1.0">.</tspan><tspan dx="1.0">229275</tspan></text>
<text x="520.3" y="372.7">0<tspan dx="1.0">.</tspan><tspan dx="1.0">224333</tspan></text>
<text x="556.6" y="392.7">0<tspan dx="1.0">.</tspan><tspan dx="1.0">2</tspan></text>
<text x="576.0" y="398.6">0</text>
<text x="595.4" y="403.1">0<tspan dx="1.0">.</tspan><tspan dx="1.0">174333</tspan></text>
<text x="624.7" y="408.7">0<tspan dx="1.0">.</tspan><tspan dx="1.0">03</tspan></text>
<text x="671.5" y="418.8">0<tspan dx="1.0">.</tspan><tspan dx="1.0">06</tspan></text>
<text x="705.4" y="367.5">0<tspan dx="1.0">.</tspan><tspan dx="1.0">1</tspan></text>
<text x="779.6" y="419.8">52<tspan dx="1.0">.</tspan><tspan dx="1.0">4</tspan></text>
<text x="727.7" y="452.8">0<tspan dx="1.0">.</tspan><tspan dx="1.0">1</tspan></text>
<text x="755.6" y="483.2">0<tspan dx="1.0">.</tspan><tspan dx="1.0">125932</tspan></text>
<text x="843.0" y="518.8">0<tspan dx="1.0">.</tspan><tspan dx="1.0">1</tspan></text>
<text x="830.0" y="583.6">0<tspan dx="1.0">.</tspan><tspan dx="1.0">06</tspan></text>
<text x="808.0" y="586.5">52<tspan dx="1.0">.</tspan><tspan dx="1.0">3</tspan></text>
<text x="796.5" y="601.3">0<tspan dx="1.0">.</tspan><tspan dx="1.0">2</tspan></text>
<text x="799.0" y="610.3">0<tspan dx="1.0">.</tspan><tspan dx="1.0">205932</tspan></text>
<text x="743.8" y="207.5">0</text>
<text x="771.9" y="217.9">0<tspan dx="1.0">.</tspan><tspan dx="1.0">516987</tspan></text>
<text x="760.4" y="251.8">52<tspan dx="1.0">.</tspan><tspan dx="1.0">5</tspan></text>
<text x="775.0" y="249.0">0<tspan dx="1.0">.</tspan><tspan dx="1.0">5</tspan></text>
<text x="738.7" y="308.7">0<tspan dx="1.0">.</tspan><tspan dx="1.0">06</tspan></text>
<text x="791.5" y="316.8">0<tspan dx="1.0">.</tspan><tspan dx="1.0">456987</tspan></text>
<text x="854.8" y="387.0">0<tspan dx="1.0">.</tspan><tspan dx="1.0">4</tspan></text>
<text x="914.8" y="424.0">0</text>
<text x="372.7" y="482.6">0<tspan dx="1.0">.</tspan><tspan dx="1.0">876592</tspan></text>
<text x="349.7" y="515.6">0<tspan dx="1.0">.</tspan><tspan dx="1.0">9</tspan></text>
</g></svg>
  </div>

  <!-- list -->
  <div id="list" class="a">
    <div class="a" style="left:16px;top:32px;width:232px;height:14px;background:#0078d7"></div>
    <div class="cb off" style="left:2px;top:2px"></div>
    <div class="it" style="top:2.2px">111</div>
    <div class="cb on" style="left:2px;top:17px"><svg width="13" height="13" viewBox="0 0 13 13"><path d="M3.300 6.700l2.100 2.100 4.300-4.600" fill="none" stroke="#fff" stroke-width="1.200"/></svg></div>
    <div class="it" style="top:17.2px">D8</div>
    <div class="cb on" style="left:2px;top:32px"><svg width="13" height="13" viewBox="0 0 13 13"><path d="M3.300 6.700l2.100 2.100 4.300-4.600" fill="none" stroke="#fff" stroke-width="1.200"/></svg></div>
    <div class="it" style="top:32.2px;color:#fff">I_TRIDA</div>
    <div class="cb off" style="left:2px;top:47px"></div>
    <div class="it" style="top:47.2px">TEST</div>
    <div class="cb on" style="left:2px;top:62px"><svg width="13" height="13" viewBox="0 0 13 13"><path d="M3.300 6.700l2.100 2.100 4.300-4.600" fill="none" stroke="#fff" stroke-width="1.200"/></svg></div>
    <div class="it" style="top:62.2px">VETEVA</div>
    <div class="cb on" style="left:2px;top:77px"><svg width="13" height="13" viewBox="0 0 13 13"><path d="M3.300 6.700l2.100 2.100 4.300-4.600" fill="none" stroke="#fff" stroke-width="1.200"/></svg></div>
    <div class="it" style="top:77.2px">VETEVA1</div>
    <div class="cb on" style="left:2px;top:92px"><svg width="13" height="13" viewBox="0 0 13 13"><path d="M3.300 6.700l2.100 2.100 4.300-4.600" fill="none" stroke="#fff" stroke-width="1.200"/></svg></div>
    <div class="it" style="top:92.2px">VETEVA2</div>
    <div class="cb on" style="left:2px;top:107px"><svg width="13" height="13" viewBox="0 0 13 13"><path d="M3.300 6.700l2.100 2.100 4.300-4.600" fill="none" stroke="#fff" stroke-width="1.200"/></svg></div>
    <div class="it" style="top:107.2px">VETEVB</div>
    <div class="cb on" style="left:2px;top:122px"><svg width="13" height="13" viewBox="0 0 13 13"><path d="M3.300 6.700l2.100 2.100 4.300-4.600" fill="none" stroke="#fff" stroke-width="1.200"/></svg></div>
    <div class="it" style="top:122.2px">VETEVBB1</div>
    <div class="cb on" style="left:2px;top:137px"><svg width="13" height="13" viewBox="0 0 13 13"><path d="M3.300 6.700l2.100 2.100 4.300-4.600" fill="none" stroke="#fff" stroke-width="1.200"/></svg></div>
    <div class="it" style="top:137.2px">VETEVBB2</div>
  </div>

  <!-- right panel -->
  <div class="btn" style="left:654.500px;top:279px;width:25px;height:23px"><div class="ib"></div><svg style="left:0;top:0" width="23" height="21" viewBox="0 0 23 21"><circle cx="6" cy="10.600" r="2.100" fill="#000"/><path d="M10.500 3.500v14.200l7.200-7.100z" fill="#000"/></svg></div>
  <div class="btn" style="left:745px;top:279px;width:104px;height:23px"><svg style="left:9px;top:4px" width="12" height="15" viewBox="0 0 12 15"><path d="M6 1l5 6h-3v7h-4v-7h-3z" fill="#30e030" stroke="#0a400a" stroke-width="1"/></svg><div class="t" style="left:49.500px;top:6px;letter-spacing:-0.200px">Vyber vše</div></div>
  <div class="btn" style="left:745px;top:310px;width:104px;height:19px"><svg style="left:3px;top:2px" width="15" height="15" viewBox="0 0 15 15"><path d="M1.500 1.500l11 11M12.500 1l-11 12" stroke="#e01010" stroke-width="2"/></svg><div class="t" style="left:46.500px;top:4px;letter-spacing:-0.130px">Zruš výběr</div></div>

  <div class="cb on" style="left:653px;top:336px"><svg width="13" height="13" viewBox="0 0 13 13"><path d="M3.300 6.700l2.100 2.100 4.300-4.600" fill="none" stroke="#fff" stroke-width="1.200"/></svg></div>
  <div class="t" style="left:672px;top:337.500px;letter-spacing:-0.150px">ZOOM dle vybr. trasy.</div>
  <div class="cb on" style="left:653px;top:360px"><svg width="13" height="13" viewBox="0 0 13 13"><path d="M3.300 6.700l2.100 2.100 4.300-4.600" fill="none" stroke="#fff" stroke-width="1.200"/></svg></div>
  <div class="t" style="left:672px;top:361.500px;letter-spacing:-0.260px">Popis hl. bodů</div>
  <div class="cb on" style="left:653px;top:383px"><svg width="13" height="13" viewBox="0 0 13 13"><path d="M3.300 6.700l2.100 2.100 4.300-4.600" fill="none" stroke="#fff" stroke-width="1.200"/></svg></div>
  <div class="t" style="left:672px;top:384.500px;letter-spacing:-0.290px">Popis hektometrů</div>

  <div class="a" style="left:653px;top:410px;width:54px;height:21px;background:#fff;border:1px solid #7a7a7a;border-radius:3px;box-sizing:border-box">
    <div class="a" style="left:1px;top:2px;width:33px;height:15px;background:#ffffc8"></div>
    <div class="t" style="left:2.500px;top:3.400px">0.100</div>
    <svg class="a" style="left:39px;top:7px" width="10" height="6" viewBox="0 0 10 6"><path d="M1 1l4 4 4-4" fill="none" stroke="#444" stroke-width="1"/></svg>
  </div>
  <div class="t" style="left:657px;top:536.200px;font-size:12.500px;font-weight:bold;color:#000;letter-spacing:0.050px">XYZ</div>

  <!-- bottom bar -->
  <div class="btn" style="left:4px;top:651px;width:27px;height:24px"><svg style="left:0.200px;top:1.500px" width="22" height="20" viewBox="0 0 22 20"><path d="M4.500 1v17" stroke="#e01818" stroke-width="1.400"/><path d="M2 13h19" stroke="#e01818" stroke-width="1.200"/><path d="M2 15.500h5l-2.500 3.500z" fill="#e01818"/><ellipse cx="13.500" cy="3.800" rx="3" ry="1.700" fill="#ddd" stroke="#000" stroke-width="0.900"/><ellipse cx="10.500" cy="10" rx="2.600" ry="1.300" fill="#ddd" stroke="#000" stroke-width="0.900"/></svg></div>
  <div class="cb off" style="left:54px;top:658px"></div>
  <div class="t" style="left:73px;top:651.500px;line-height:13px;white-space:normal;width:60px">Přepínač souřadnic</div>
  <div class="btn" style="left:272px;top:651px;width:26px;height:24px"><div class="ib"></div><svg style="left:0.800px;top:-0.400px" width="24" height="22" viewBox="0 0 24 22"><circle cx="12.200" cy="5.500" r="2.100" fill="#000"/><path d="M5 10h14.400l-7.200 7.200z" fill="#000"/></svg></div>
  <div class="inp" style="left:424px;top:651px;width:92px"><div class="t" style="left:2.500px;top:3.300px;letter-spacing:-0.160px">Y=&nbsp; 765891.564</div></div>
  <div class="inp" style="left:549px;top:651px;width:99px"><div class="t" style="left:2.500px;top:3.300px;letter-spacing:-0.160px">X=&nbsp; 990182.924</div></div>
  <div class="btn" style="left:825px;top:664px;width:78px;height:20.500px"><div class="t" style="left:0;top:4px;width:75px;text-align:center;letter-spacing:-0.200px">Konec</div></div>
</div>

<svg width="0" height="0" style="position:absolute"><defs>
<g id="road"><path d="M42 1.200c-6 0.300-11 0.600-14.400 1c-6 0.700-10.100 2.200-12.300 4.200c-1.600 1.500-1.700 3.200-0.300 4.600c1.600 1.600 4.200 3 9.500 4.400c5 1.300 10.500 2.600 13.200 4.600c-5 2-15 5-24.500 8.500l-12.700 4.700v2.600l32.900 9.400c7-3 13.300-6.500 17.300-10.400c4.500-4.400 9.100-7.600 9.800-12.800c0.500-3.800-1.500-6.100-4.100-7.800c-3-2-6-2.300-12.600-3.700c-5.700-1.200-12.800-1.900-14.800-3.500c-1.600-1.300-1.100-2.400 2.900-3.500c2.500-0.700 6-1.500 10.100-2.300z" fill="#1f4b8e"/><path d="M0.800 33.400L33.400 42.300C40 39.500 46 36 50.500 32C55 28 58.600 24.500 59.900 20" fill="none" stroke="#e8edf5" stroke-width="0.800"/><path d="M20.900 6.500c1.500 0.900 3.300 1.600 5.500 2.300M28.800 9.500c1.800 0.500 3.700 1 5.600 1.400M37.400 11.600c1.900 0.400 3.800 0.800 5.500 1.300M45.800 14c2.300 1.300 3.400 3 2.600 5" fill="none" stroke="#fff" stroke-width="0.800"/><path d="M35.300 26.300l8.700-3.400M17.300 34.400l13-5.400" stroke="#fff" stroke-width="2.200" fill="none"/></g>
<linearGradient id="lens" x1="0" y1="0" x2="0" y2="1"><stop offset="0" stop-color="#f4f8fc"/><stop offset="1" stop-color="#9fb9d4"/></linearGradient>
<g id="mag"><path d="M11.300 11.300l5 5.500" stroke="#8a5a3c" stroke-width="2.400" stroke-linecap="round"/><path d="M11.500 11l4.500 5" stroke="#d9a066" stroke-width="0.800"/><circle cx="7.500" cy="7.500" r="5.800" fill="url(#lens)" stroke="#6e7f92" stroke-width="1.500"/></g>
<g id="mag2"><path d="M9.500 10l5.500 6" stroke="#8a5a3c" stroke-width="2.200" stroke-linecap="round"/><path d="M9.800 9.800l5 5.500" stroke="#d9a066" stroke-width="0.700"/><circle cx="6.500" cy="6.500" r="4.800" fill="url(#lens)" stroke="#6e7f92" stroke-width="1.400"/></g>
</defs></svg>
</body></html>
